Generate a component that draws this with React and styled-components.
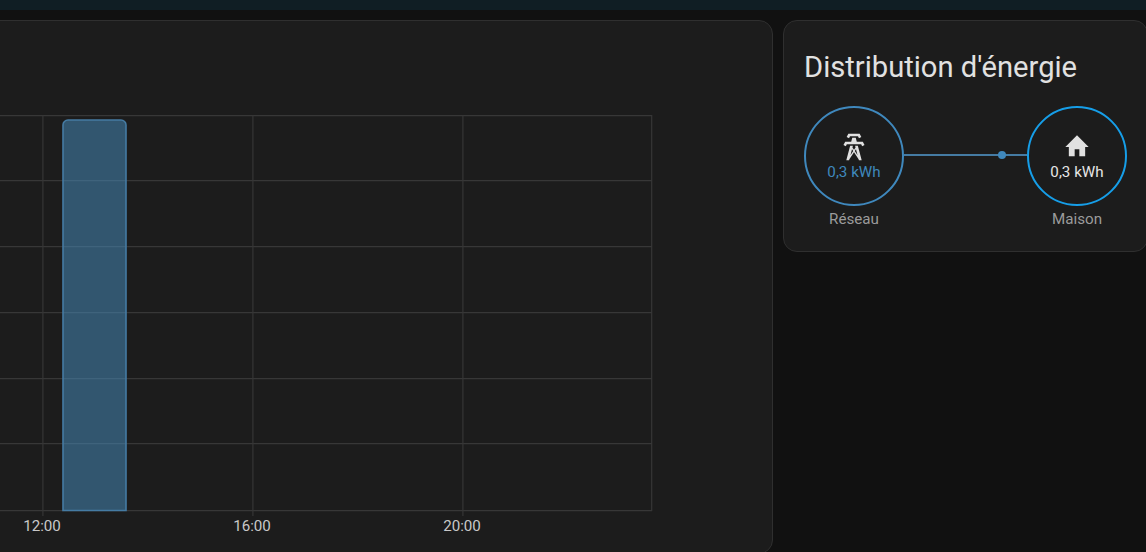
import React from 'react';
import styled, { createGlobalStyle } from 'styled-components';

const GlobalStyle = createGlobalStyle`
  html, body {
    margin: 0;
    padding: 0;
    background: #111111;
  }
  body {
    font-family: Roboto, "Liberation Sans", sans-serif;
  }
`;

const Page = styled.div`
  width: 1146px;
  height: 552px;
  overflow: hidden;
  background: #111111;
`;

const TopBar = styled.div`
  height: 10px;
  background: #101e24;
`;

const Columns = styled.div`
  display: grid;
  grid-template-columns: 793px 365px;
  gap: 10px;
  align-items: start;
  margin: 10px 0 0 -20px;
`;

const Card = styled.section`
  box-sizing: border-box;
  background: #1c1c1c;
  border: 1px solid #2f2f2f;
  border-radius: 14px;
`;

const ChartCard = styled(Card)`
  height: 534px;
  padding: 94px 0 0 19px;
`;

const ChartSvg = styled.svg`
  display: block;
  overflow: visible;
`;

const AxisLabel = styled.text`
  font-size: 15.17px;
  fill: #c8c8c8;
  text-anchor: middle;
`;

const EnergyCard = styled(Card)`
  height: 232px;
  padding: 26px 20px 0;
`;

const Title = styled.h1`
  margin: 0 0 19px;
  font-size: 29.17px;
  line-height: 40px;
  font-weight: 400;
  color: #e1e1e1;
`;

const FlowRow = styled.div`
  display: flex;
  align-items: flex-start;
`;

const Node = styled.div`
  width: 100px;
  flex: none;
  display: flex;
  flex-direction: column;
  align-items: center;
`;

const Circle = styled.div`
  box-sizing: border-box;
  width: 100px;
  height: 100px;
  border-radius: 50%;
  border: 2px solid ${(p) => p.$ring};
  display: flex;
  flex-direction: column;
  align-items: center;
  justify-content: center;
  padding-top: 2px;
  font-size: 15.17px;
  line-height: 18px;
  color: ${(p) => p.$text};
`;

const NodeIcon = styled.svg`
  display: block;
  flex: none;
  width: ${(p) => p.$size}px;
  height: ${(p) => p.$size}px;
  margin: ${(p) => p.$margin};
  fill: #e1e1e1;
`;

const NodeLabel = styled.div`
  margin-top: 4px;
  font-size: 15.17px;
  line-height: 18px;
  color: #9b9b9b;
`;

const Connector = styled.div`
  position: relative;
  flex: 1;
  height: 2px;
  margin-top: 48px;
  background: #457ba3;
`;

const Dot = styled.span`
  position: absolute;
  left: 94px;
  top: -3px;
  width: 8px;
  height: 8px;
  border-radius: 50%;
  background: #3f88bd;
`;

const rows = [115.7, 180.7, 246.7, 312.7, 378.7, 443.7, 510.7];
const cols = [42.9, 252.9, 462.9, 651.7];
const ticks = [
  { x: 42, label: '12:00' },
  { x: 252, label: '16:00' },
  { x: 462, label: '20:00' },
];

function UsageChart() {
  return (
    <ChartSvg width="652" height="430" viewBox="0 115 652 430">
      {rows.map((y) => (
        <line key={y} x1="0" x2="652" y1={y} y2={y} stroke="#373737" strokeWidth="1.17" />
      ))}
      {cols.map((x) => (
        <line key={x} x1={x} x2={x} y1="115" y2={x === 651.7 ? 511 : 516} stroke="#373737" strokeWidth="1.17" />
      ))}
      <path
        d="M63 510.5V125a5 5 0 0 1 5-5h53a5 5 0 0 1 5 5V510.5Z"
        fill="rgba(72,143,194,0.5)"
        stroke="#457ba3"
        strokeWidth="1.6"
      />
      {ticks.map((t) => (
        <AxisLabel key={t.label} x={t.x} y="531">
          {t.label}
        </AxisLabel>
      ))}
    </ChartSvg>
  );
}

export default function App() {
  return (
    <Page>
      <GlobalStyle />
      <TopBar />
      <Columns>
        <ChartCard>
          <UsageChart />
        </ChartCard>
        <EnergyCard>
          <Title>Distribution d'énergie</Title>
          <FlowRow>
            <Node>
              <Circle $ring="#3f88bd" $text="#3f88bd">
                <NodeIcon $size={32} $margin="-2px 0 0" viewBox="0 0 24 24">
                  <path d="M8.28,5.45L6.5,4.55L7.76,2H16.23L17.5,4.55L15.72,5.44L15,4H9L8.28,5.45M18.62,8H14.09L13.3,5H10.7L9.91,8H5.38L4.1,10.55L5.89,11.44L6.62,10H17.38L18.1,11.45L19.89,10.56L18.62,8M17.77,22H15.7L15.46,21.1L12,15.9L8.53,21.1L8.3,22H6.23L9.12,11H11.19L10.83,12.35L12,14.1L13.16,12.35L12.81,11H14.88L17.77,22M11.4,15L10.5,13.65L9.32,18.13L11.4,15M14.68,18.12L13.5,13.64L12.6,15L14.68,18.12Z" />
                </NodeIcon>
                0,3 kWh
              </Circle>
              <NodeLabel>Réseau</NodeLabel>
            </Node>
            <Connector>
              <Dot />
            </Connector>
            <Node>
              <Circle $ring="#169ee8" $text="#e6e6e6">
                <NodeIcon $size={28} $margin="0 0 2px" viewBox="0 0 24 24">
                  <path d="M10,20V14H14V20H19V12H22L12,2L2,12H5V20H10Z" />
                </NodeIcon>
                0,3 kWh
              </Circle>
              <NodeLabel>Maison</NodeLabel>
            </Node>
          </FlowRow>
        </EnergyCard>
      </Columns>
    </Page>
  );
}
